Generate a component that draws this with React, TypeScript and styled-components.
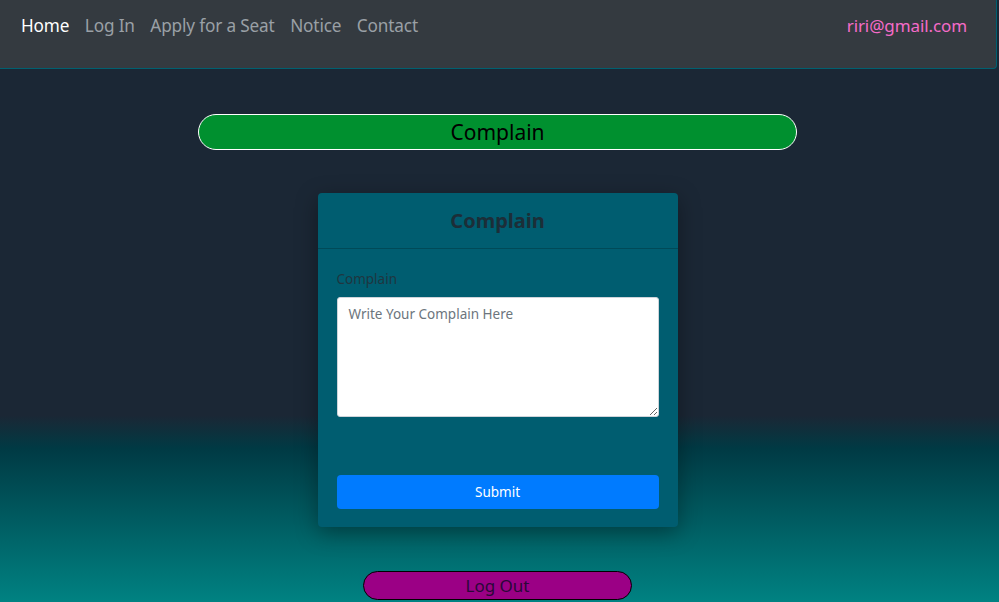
import React from "react";
import styled, { createGlobalStyle } from "styled-components";

const Global = createGlobalStyle`
  html, body { margin: 0; padding: 0; }
  body {
    font-family: "Noto Sans", "Open Sans", sans-serif;
    background: #1b2735;
  }
  * { box-sizing: border-box; }
`;

const Page = styled.div`
  height: 602px;
  overflow: hidden;
  padding-right: 4px;
  background: linear-gradient(
    to bottom,
    #1b2735 0%,
    #1b2735 69%,
    #003a44 74.5%,
    #008282 100%
  );
  display: flex;
  flex-direction: column;
  align-items: center;
`;

const Nav = styled.nav`
  align-self: flex-start;
  width: 997px;
  height: 69px;
  background: #343a40;
  border-right: 1px solid #006070;
  border-bottom: 1px solid #006070;
  border-bottom-right-radius: 4px;
  display: flex;
  align-items: flex-start;
  justify-content: space-between;
  padding: 13px 29px 0 21px;
`;

const NavList = styled.div`
  display: flex;
  gap: 15.5px;
`;

const NavLink = styled.a<{ $active?: boolean }>`
  font-size: 17.2px;
  line-height: 26px;
  color: ${(p) => (p.$active ? "#ffffff" : "#9aa0a6")};
  text-decoration: none;
  letter-spacing: -0.15px;
`;

const Email = styled.span`
  font-size: 17px;
  line-height: 26px;
  color: #f46bc8;
  letter-spacing: -0.1px;
`;

const Banner = styled.div`
  margin-top: 45px;
  width: 599px;
  height: 36px;
  background: #00902f;
  border: 1px solid #ffffff;
  border-radius: 18px;
  display: flex;
  align-items: center;
  justify-content: center;
  font-size: 21px;
  color: #000000;
`;

const Card = styled.div`
  margin-top: 43px;
  width: 360px;
  background: #005d70;
  border-radius: 4px;
  box-shadow: 0 6px 22px rgba(0, 0, 0, 0.35);
`;

const CardHeader = styled.div`
  height: 56px;
  border-bottom: 1px solid #004a58;
  display: flex;
  align-items: center;
  justify-content: center;
  font-size: 20px;
  font-weight: 700;
  color: #1c2e38;
`;

const CardBody = styled.div`
  padding: 20px 19px 18px;
  display: flex;
  flex-direction: column;
`;

const Label = styled.label`
  font-size: 13.5px;
  line-height: 20px;
  color: #1f3640;
  margin-bottom: 8px;
`;

const TextArea = styled.textarea`
  width: 322px;
  height: 120px;
  resize: vertical;
  border: 1px solid #ced4da;
  border-radius: 3px;
  padding: 7px 11px;
  font-family: "Noto Sans", "Open Sans", sans-serif;
  font-size: 13.5px;
  color: #495057;
  background: #ffffff;
  &::placeholder { color: #6c757d; }
`;

const SubmitButton = styled.button`
  margin-top: 58px;
  width: 322px;
  height: 34px;
  border: none;
  border-radius: 4px;
  background: #007bff;
  color: #ffffff;
  font-family: "Noto Sans", "Open Sans", sans-serif;
  font-size: 13.5px;
`;

const LogoutButton = styled.button`
  margin-top: 44px;
  width: 269px;
  height: 29px;
  border: 1px solid #000000;
  border-radius: 15px;
  background: #9b0085;
  color: #2a0838;
  font-family: "Noto Sans", "Open Sans", sans-serif;
  font-size: 17px;
  padding: 0;
  display: flex;
  align-items: center;
  justify-content: center;
`;

export default function App() {
  return (
    <>
      <Global />
      <Page>
        <Nav>
          <NavList>
            <NavLink $active>Home</NavLink>
            <NavLink>Log In</NavLink>
            <NavLink>Apply for a Seat</NavLink>
            <NavLink>Notice</NavLink>
            <NavLink>Contact</NavLink>
          </NavList>
          <Email>riri@gmail.com</Email>
        </Nav>
        <Banner>Complain</Banner>
        <Card>
          <CardHeader>Complain</CardHeader>
          <CardBody>
            <Label>Complain</Label>
            <TextArea placeholder="Write Your Complain Here" />
            <SubmitButton>Submit</SubmitButton>
          </CardBody>
        </Card>
        <LogoutButton>Log Out</LogoutButton>
      </Page>
    </>
  );
}
